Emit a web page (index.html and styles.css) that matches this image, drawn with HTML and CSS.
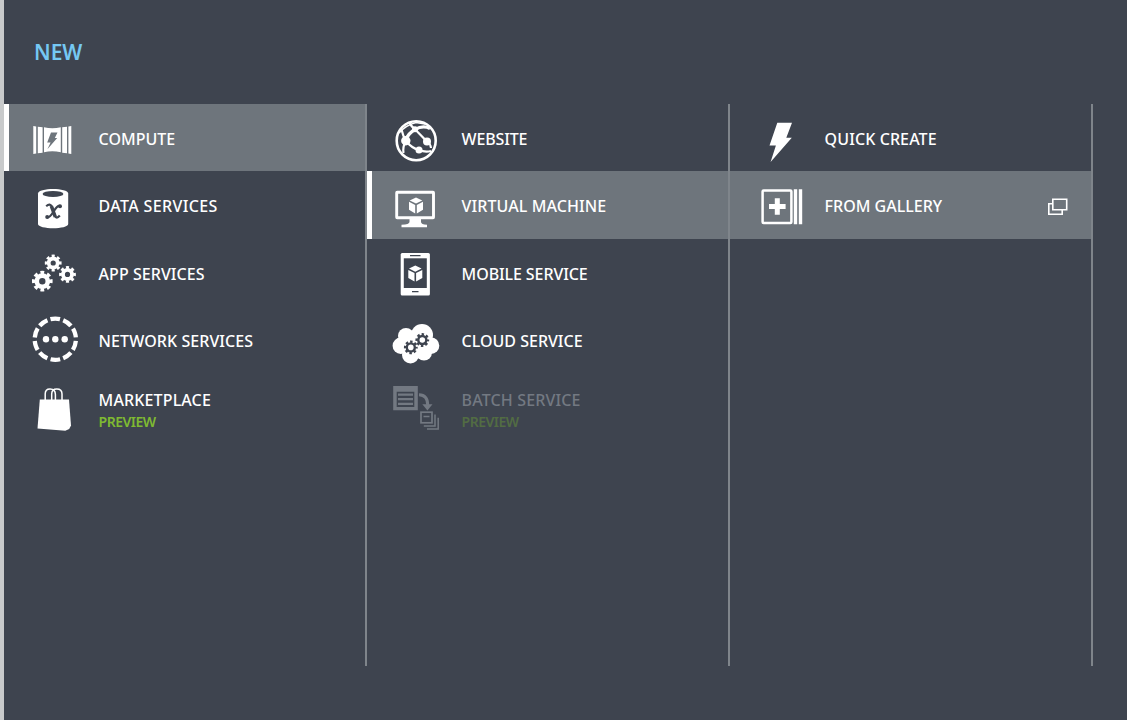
FILE: index.html
```html
<!DOCTYPE html>
<html lang="en">
<head>
<meta charset="utf-8">
<title>New</title>
<link rel="stylesheet" href="styles.css">
</head>
<body>
<svg class="defs" width="0" height="0" aria-hidden="true">
  <defs>
    <g id="cube">
      <path d="M0-8.2 6.3-5.2 0-2 -6.3-5.2Z M-7-3.8 -.8-.7V7.8L-7 4.2Z M7-3.8 .8-.7V7.8L7 4.2Z"/>
    </g>
    <g id="gear" fill="none" stroke="currentColor">
      <circle r="4.5" stroke-width="3.8"/>
      <circle r="7" stroke-width="2.8" pathLength="16" stroke-dasharray="1.1 .9" stroke-dashoffset=".55"/>
    </g>
  </defs>
</svg>
<main class="drawer">
  <h1 class="title">NEW</h1>
  <div class="columns">
    <ul class="column">
      <li class="item selected">
        <svg class="icon" viewBox="29 114 52 48">
          <path d="M33.3 126 36.2 126.5V153.5L33.3 154Z M37.8 126.7 42.6 127.3V152.7L37.8 153.3Z M44 127.3Q52.3 129.2 60.8 127.3V152.2Q52.3 150.3 44 152.2Z M62.2 127.3 67 126.7V153.3L62.2 152.7Z M68.4 126.5 71.3 126V154L68.4 153.5Z"/>
          <path class="cut" d="M51 132.6H57.5L54.8 138H57.2L47.4 149.2 50.6 142.6H47.2Z"/>
        </svg>
        <span class="label w-compute">COMPUTE</span>
      </li>
      <li class="item">
        <svg class="icon" viewBox="29 181 52 48">
          <path d="M38 193.6C38 187.4 68.2 187.4 68.2 193.6V224C68.2 229.6 38 229.6 38 224Z"/>
          <ellipse class="cut" cx="53" cy="193.9" rx="10.4" ry="3"/>
          <path class="cut-line" stroke-width="2.2" d="M46.2 206.2Q50.2 202.6 52 207L54.8 215.5Q56.4 219.6 59.8 215.5M60 206Q57.5 205 53.8 211.2Q49.6 218 47 217.3"/>
          <path class="cut-line" stroke-width="3.5" d="M51.3 206 55.3 217"/>
          <circle class="cut" cx="60" cy="206.2" r="2"/><circle class="cut" cx="47.2" cy="217" r="2"/>
        </svg>
        <span class="label w-data">DATA SERVICES</span>
      </li>
      <li class="item">
        <svg class="icon" viewBox="29 249 52 48">
          <use href="#gear" transform="translate(53.2 263)"/>
          <use href="#gear" transform="translate(67.5 274.4)"/>
          <use href="#gear" transform="translate(42.3 281.2) scale(1.23)"/>
        </svg>
        <span class="label w-app">APP SERVICES</span>
      </li>
      <li class="item">
        <svg class="icon" viewBox="29 316 52 48">
          <circle class="line" cx="55.3" cy="339.2" r="20.6" stroke-width="4.3" pathLength="100" stroke-dasharray="7.4 2.6" stroke-dashoffset="-1.3" transform="rotate(-108 55.3 339.2)"/>
          <circle cx="46" cy="339.3" r="3.2"/><circle cx="55.3" cy="339.3" r="3.2"/><circle cx="64.7" cy="339.3" r="3.2"/>
        </svg>
        <span class="label w-network">NETWORK SERVICES</span>
      </li>
      <li class="item">
        <svg class="icon" viewBox="29 383 52 48">
          <path d="M39.8 399.4H69L71 425.5 69.2 429 65.3 430.7 37.5 428.6Z"/>
          <path class="line" stroke-width="1.5" d="M45.2 400V394Q45.2 389 50 389Q55.4 389 55.4 394.5V400M51.7 400V394Q51.7 389 56.8 389Q62 389 62 394V400"/>
        </svg>
        <span class="label two-line w-market">MARKETPLACE<small class="preview">PREVIEW</small></span>
      </li>
    </ul>
    <ul class="column">
      <li class="item">
        <svg class="icon" viewBox="392 114 52 48">
          <circle class="line" cx="416.2" cy="140.7" r="19.5" stroke-width="2.6"/>
          <circle cx="405.8" cy="140.8" r="4.7"/><circle cx="427" cy="141.6" r="4"/><circle cx="419" cy="150" r="3.5"/><circle cx="415" cy="129.3" r="3"/>
          <path class="line" stroke-width="2.2" d="M401.5 129.5Q403 136 405.8 140.8Q402.5 147 403.5 153M409.5 122.5Q411 126.5 415 129.3L427 141.6Q430.5 143.5 431 148M407 142Q411 147.5 419 150Q425 152.5 431 151"/>
          <path class="line" stroke-width="3.2" d="M405.8 140Q408 133.5 415 129.5Q423 125 430 128.5"/>
          <path class="line" stroke-width="1.4" d="M399 133Q406 125 416 122.5L425 124"/>
        </svg>
        <span class="label w-website">WEBSITE</span>
      </li>
      <li class="item selected">
        <svg class="icon" viewBox="392 181 52 48">
          <rect class="line" x="396.7" y="192.2" width="36.8" height="25.6" stroke-width="2.9" rx=".5"/>
          <path d="M409.5 218H421V222Q421 224.5 427 224.7V227.3H401.5V224.7Q409.5 224.5 409.5 222Z"/>
          <use href="#cube" transform="translate(416 205.6)"/>
        </svg>
        <span class="label w-vm">VIRTUAL MACHINE</span>
      </li>
      <li class="item">
        <svg class="icon" viewBox="392 249 52 48">
          <rect x="400.7" y="253" width="29.2" height="42.6" rx="1.5"/>
          <rect class="cut" x="403.8" y="258.3" width="23" height="29.7"/>
          <path class="cut-line" stroke-width="1.3" d="M410 255.7H420.5M412 291.7H418.5"/>
          <use href="#cube" transform="translate(415.3 273.7)"/>
        </svg>
        <span class="label w-mobile">MOBILE SERVICE</span>
      </li>
      <li class="item">
        <svg class="icon" viewBox="392 316 52 48">
          <circle cx="400.8" cy="345.8" r="8.2"/><circle cx="406" cy="336" r="8"/><circle cx="422" cy="335" r="11"/>
          <circle cx="431" cy="345.7" r="8.3"/><circle cx="410.5" cy="355" r="8.5"/><circle cx="424" cy="352.5" r="8"/>
          <rect x="401" y="335" width="30" height="18"/>
          <g class="cut-color">
            <use href="#gear" transform="translate(410.8 347.4) scale(.82)"/><use href="#gear" transform="translate(422.3 340) scale(.82)"/>
          </g>
          <circle cx="410.8" cy="347.4" r="2.8"/><circle cx="422.3" cy="340" r="2.8"/>
        </svg>
        <span class="label w-cloud">CLOUD SERVICE</span>
      </li>
      <li class="item disabled">
        <svg class="icon" viewBox="392 383 52 48">
          <path fill-rule="evenodd" d="M393.2 386H417.8V410.2H393.2ZM396.7 391.8V407H414.3V391.8Z"/>
          <path class="line" stroke-width="2.2" d="M398 394.6H413M398 399.2H413M398 403.8H413"/>
          <path class="line" stroke-width="3" d="M419 394.7Q427.7 395 427.7 405"/>
          <path d="M422.3 404.2H432.5L427.4 410.5Z"/>
          <rect class="line" x="421" y="412.2" width="11" height="10.6" stroke-width="1.7"/>
          <path class="line" stroke-width="1.5" d="M423.5 416.6H429.5M435 414.5V425.9H423.8M438.2 417.8V429H427"/>
        </svg>
        <span class="label two-line w-batch">BATCH SERVICE<small class="preview">PREVIEW</small></span>
      </li>
    </ul>
    <ul class="column">
      <li class="item">
        <svg class="icon" viewBox="755 114 52 48">
          <path d="M777.3 122.7H792L786.3 137.8H791.8L770.6 162 775.9 145.4H769.5Z"/>
        </svg>
        <span class="label w-quick">QUICK CREATE</span>
      </li>
      <li class="item selected">
        <svg class="icon" viewBox="755 181 52 48">
          <rect class="line" x="762.6" y="190.4" width="28.8" height="32.5" rx="1" stroke-width="2.5"/>
          <path d="M774.8 198.3H779.8V204H785.6V209H779.8V214.7H774.8V209H769V204H774.8ZM793.8 189.3H797.2V224.2H793.8ZM798.8 189.3H802.2V224.2H798.8Z"/>
        </svg>
        <span class="label w-gallery">FROM GALLERY</span>
        <svg class="popout" viewBox="0 0 22 20">
          <path class="line" stroke-width="1.6" d="M5.8 2.3H19.7V12.7H5.8ZM5 6.7H1.8V17.2H15.2V13.5"/>
        </svg>
      </li>
    </ul>
  </div>
</main>
</body>
</html>
```

FILE: styles.css
```css
* { box-sizing: border-box; }
body {
  margin: 0;
  background: #3e444f;
  color: #fff;
  font-family: "Noto Sans", "Open Sans", sans-serif;
}
.defs { position: absolute; }
.drawer {
  height: 720px;
  border-left: 4px solid #c8cacb;
}
.title {
  height: 104px;
  margin: 0;
  padding: 36px 0 0 30px;
  color: #75c8f3;
  font-size: 21px;
  font-weight: 600;
  line-height: 32px;
}
.columns {
  display: grid;
  grid-template-columns: repeat(3, 363px);
  height: 562px;
}
.column {
  margin: 0;
  padding: 0;
  list-style: none;
  border-right: 2px solid #7f858b;
}
.item {
  display: flex;
  align-items: center;
  height: 67.45px;
  padding-left: 25px;
}
.selected { background: #6e757c; }
.column:not(:last-child) .selected {
  padding-left: 20px;
  border-left: 5px solid #fff;
}
.icon {
  flex: none;
  width: 52px;
  height: 48px;
  margin-right: 17.6px;
  fill: currentColor;
  overflow: visible;
}
.line { fill: none; stroke: currentColor; }
.cut { fill: #3e444f; }
.selected .cut { fill: #6e757c; }
.cut-line { fill: none; stroke: #3e444f; }
.cut-color { color: #3e444f; }
.label {
  font-size: 16px;
  font-weight: 500;
  line-height: 22px;
  white-space: nowrap;
  padding-top: 2.4px;
}
.two-line { padding-top: 7px; }
.w-data { letter-spacing: .35px; }
.w-network, .w-vm { letter-spacing: .08px; }
.w-app { letter-spacing: .05px; }
.w-market, .w-batch { letter-spacing: .14px; }
.w-quick { letter-spacing: .1px; }
.w-website { letter-spacing: -.15px; }
.w-mobile { letter-spacing: -.1px; }
.preview {
  display: block;
  color: #7fba32;
  font-size: 14px;
  font-weight: 600;
  line-height: 22px;
  letter-spacing: -.5px;
}
.popout {
  width: 22px;
  height: 20px;
  margin: 3px 22px 0 auto;
}
.disabled { color: #737982; }
.disabled .preview { color: #526c43; }
```
